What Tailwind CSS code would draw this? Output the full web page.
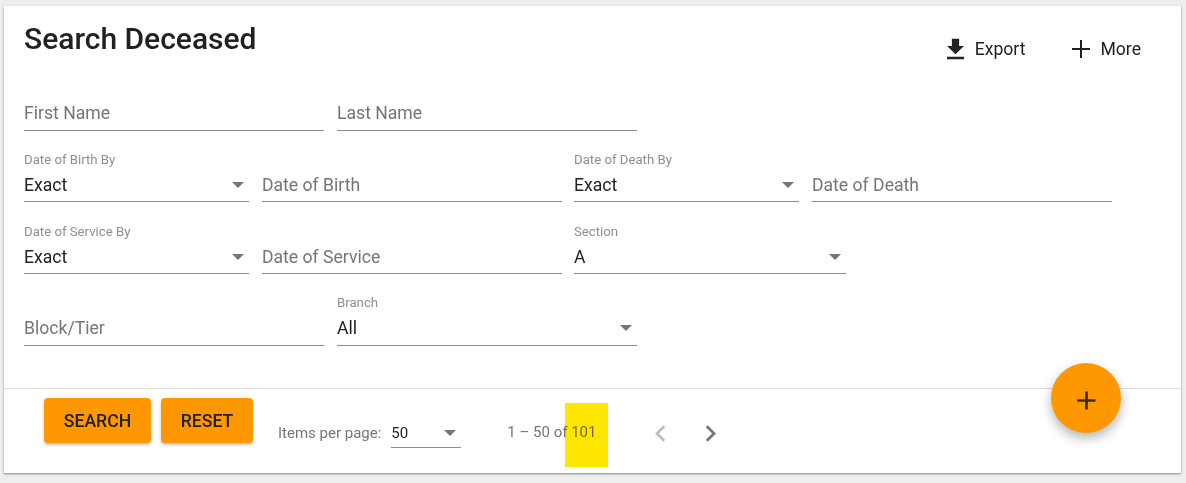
<!DOCTYPE html>
<html lang="en">
<head>
  <meta charset="UTF-8" />
  <title>Search Deceased</title>
  <script src="https://cdn.jsdelivr.net/npm/@tailwindcss/browser@4"></script>
</head>
<body class="bg-[#eeeeee] h-[483px] overflow-hidden font-['Roboto',sans-serif]">
  <div class="relative ml-1 mt-1.5 w-[1177px] h-[467px] bg-white shadow-[0_1px_2px_rgba(0,0,0,0.45)]">

    <!-- Header -->
    <div class="flex h-[82px]">
      <h1 class="ml-5 mt-[15px] h-9 text-[30px] leading-9 font-medium text-[#212121]">Search Deceased</h1>
      <div class="ml-auto flex items-start pt-[29px] pr-[40px] text-[#212121] text-[17.6px] leading-7 font-normal">
        <button class="flex items-center">
          <svg class="w-[29px] h-[29px] mr-[5px] -my-px" viewBox="0 0 24 24" fill="#212121"><path d="M19 9h-4V3H9v6H5l7 7 7-7zM5 18v2h14v-2H5z"/></svg>
          Export
        </button>
        <button class="flex items-center ml-[44px]">
          <svg class="w-6 h-6 mr-[7px]" viewBox="0 0 24 24" fill="#212121"><path d="M21 13h-8v8h-2v-8H3v-2h8V3h2v8h8v2z"/></svg>
          More
        </button>
      </div>
    </div>

    <!-- Filters -->
    <div class="pl-5 text-[17.6px]">
      <div class="flex gap-[13px] h-[42px]">
        <div class="w-[300px] h-[43px] border-b border-[#8c8c8c] pt-[14px] leading-[22px] text-[#757575]">First Name</div>
        <div class="w-[300px] h-[43px] border-b border-[#8c8c8c] pt-[14px] leading-[22px] text-[#757575]">Last Name</div>
      </div>

      <div class="flex mt-[29px] h-[43px]">
        <div class="relative w-[225px] h-[43px] border-b border-[#8c8c8c]">
          <div class="-mt-[6px] text-[13.2px] leading-[14px] text-[#8f8f8f]">Date of Birth By</div>
          <div class="mt-[7px] leading-[22px] text-[#212121]">Exact</div>
          <div class="absolute right-[5px] top-[23px] border-x-[6px] border-t-[6px] border-x-transparent border-t-[#757575]"></div>
        </div>
        <div class="ml-[13px] w-[300px] h-[43px] border-b border-[#8c8c8c] pt-[15px] leading-[22px] text-[#757575]">Date of Birth</div>
        <div class="relative ml-3 w-[225px] h-[43px] border-b border-[#8c8c8c]">
          <div class="-mt-[6px] text-[13.2px] leading-[14px] text-[#8f8f8f]">Date of Death By</div>
          <div class="mt-[7px] leading-[22px] text-[#212121]">Exact</div>
          <div class="absolute right-[5px] top-[23px] border-x-[6px] border-t-[6px] border-x-transparent border-t-[#757575]"></div>
        </div>
        <div class="ml-[13px] w-[300px] h-[43px] border-b border-[#8c8c8c] pt-[15px] leading-[22px] text-[#757575]">Date of Death</div>
      </div>

      <div class="flex mt-[29px] h-[43px]">
        <div class="relative w-[225px] h-[43px] border-b border-[#8c8c8c]">
          <div class="-mt-[6px] text-[13.2px] leading-[14px] text-[#8f8f8f]">Date of Service By</div>
          <div class="mt-[7px] leading-[22px] text-[#212121]">Exact</div>
          <div class="absolute right-[5px] top-[23px] border-x-[6px] border-t-[6px] border-x-transparent border-t-[#757575]"></div>
        </div>
        <div class="ml-[13px] w-[300px] h-[43px] border-b border-[#8c8c8c] pt-[15px] leading-[22px] text-[#757575]">Date of Service</div>
        <div class="relative ml-3 w-[272px] h-[43px] border-b border-[#8c8c8c]">
          <div class="-mt-[6px] text-[13.2px] leading-[14px] text-[#8f8f8f]">Section</div>
          <div class="mt-[7px] leading-[22px] text-[#212121]">A</div>
          <div class="absolute right-[5px] top-[23px] border-x-[6px] border-t-[6px] border-x-transparent border-t-[#757575]"></div>
        </div>
      </div>

      <div class="flex gap-[13px] mt-[29px] h-[43px]">
        <div class="w-[300px] h-[43px] border-b border-[#8c8c8c] pt-[14px] leading-[22px] text-[#757575]">Block/Tier</div>
        <div class="relative w-[300px] h-[43px] border-b border-[#8c8c8c]">
          <div class="-mt-[7px] text-[13.2px] leading-[14px] text-[#8f8f8f]">Branch</div>
          <div class="mt-[7px] leading-[22px] text-[#212121]">All</div>
          <div class="absolute right-[5px] top-[22px] border-x-[6px] border-t-[6px] border-x-transparent border-t-[#757575]"></div>
        </div>
      </div>
    </div>

    <!-- Footer -->
    <div class="mt-[42px] border-t border-[#e0e0e0] h-[85px] flex items-start">
      <button class="ml-10 mt-[9px] w-[107px] h-[45px] pt-[2px] rounded bg-[#ff9800] text-[#212121] text-[17.6px] font-medium shadow-[0_2px_3px_rgba(0,0,0,0.25)]">SEARCH</button>
      <button class="ml-2.5 mt-[9px] w-[92px] h-[45px] pt-[2px] rounded bg-[#ff9800] text-[#212121] text-[17.6px] font-medium shadow-[0_2px_3px_rgba(0,0,0,0.25)]">RESET</button>

      <div class="ml-[25px] mt-[35px] text-[15px] leading-[18px] text-[#757575]">Items per page:</div>
      <div class="relative ml-[10px] mt-[26px] w-[70px] h-[33px] border-b border-[#8c8c8c] pt-[9px] text-[15px] leading-[18px] text-[#212121]">
        50
        <div class="absolute right-[5px] top-[15px] border-x-[6px] border-t-[6px] border-x-transparent border-t-[#757575]"></div>
      </div>

      <div class="ml-[46px] mt-[34px] text-[15px] leading-[18px] text-[#757575]">1 – 50 of 101</div>
      <svg class="ml-[48px] mt-[28px] w-[33px] h-[33px]" viewBox="0 0 24 24" fill="#bdbdbd"><path d="M15.41 7.41 14 6l-6 6 6 6 1.41-1.41L10.83 12z"/></svg>
      <svg class="ml-[17px] mt-[28px] w-[33px] h-[33px]" viewBox="0 0 24 24" fill="#757575"><path d="M10 6 8.59 7.41 13.17 12l-4.58 4.59L10 18l6-6z"/></svg>
    </div>

    <!-- Highlight over the range label -->
    <div class="absolute left-[561px] top-[397px] w-[43px] h-16 bg-[#ffe600] mix-blend-multiply"></div>

    <!-- FAB -->
    <button class="absolute left-[1047px] top-[357px] w-[70px] h-[70px] rounded-full bg-[#ff9800] flex items-center justify-center shadow-[0_5px_12px_rgba(0,0,0,0.3)]">
      <svg class="w-[31px] h-[31px] mt-1" viewBox="0 0 24 24" fill="#3a2a0c"><path d="M19 13h-6v6h-2v-6H5v-2h6V5h2v6h6v2z"/></svg>
    </button>
  </div>
</body>
</html>
